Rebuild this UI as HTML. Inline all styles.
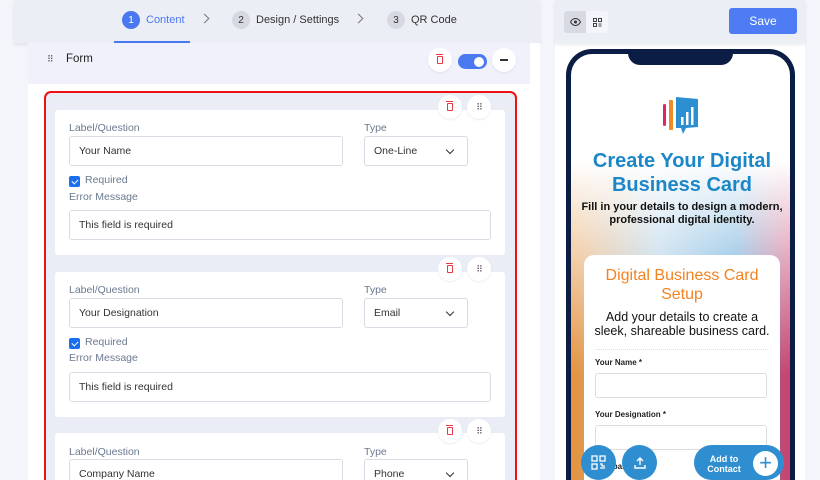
<!DOCTYPE html>
<html><head><style>
*{box-sizing:border-box;margin:0;padding:0}
html,body{width:820px;height:480px;overflow:hidden}
body{background:#f4f5fa;font-family:"Liberation Sans",sans-serif}
#wrap{position:relative;width:820px;height:480px;overflow:hidden}
.abs{position:absolute}
.topbar{left:14px;top:0;width:526px;height:43px;background:#eceef6;box-shadow:0 2px 4px rgba(0,0,0,.08)}
.step{position:absolute;top:10px;height:20px;font-size:11px;color:#333;display:flex;align-items:center;gap:6px}
.num{width:18px;height:18px;border-radius:50%;background:#d6d9e2;color:#333;font-size:10px;display:flex;align-items:center;justify-content:center}
.chev{position:absolute;top:15px;width:7px;height:7px;border-right:1.3px solid #777;border-top:1.3px solid #777;transform:rotate(45deg)}
.circ{position:absolute;width:24px;height:24px;border-radius:50%;background:#fff;box-shadow:0 1px 2px rgba(0,0,0,.08);display:flex;align-items:center;justify-content:center}
.trash{width:6px;height:8px;border:1.4px solid #e53945;border-radius:1px;position:relative}
.trash:before{content:"";position:absolute;top:-3px;left:-2px;width:7px;height:1.4px;background:#e53945}
.dots{font-size:9px;color:#555;letter-spacing:-1px;line-height:1}
.card{position:absolute;left:55px;width:450px;height:145px;background:#fff;border-radius:3px}
.lbl{position:absolute;font-size:10.5px;color:#6b7a90}
.inp{position:absolute;height:30px;border:1px solid #d8dce4;border-radius:3px;font-size:10.5px;color:#333;padding-left:9px;display:flex;align-items:center;background:#fff}
.sel:after{content:"";position:absolute;right:14px;top:10px;width:5px;height:5px;border-right:1.3px solid #333;border-bottom:1.3px solid #333;transform:rotate(45deg)}
.cb{position:absolute;width:11px;height:11px;background:#1a6ff0;border-radius:2px}
.cb:after{content:"";position:absolute;left:3.5px;top:1.5px;width:3px;height:5px;border-right:1.3px solid #fff;border-bottom:1.3px solid #fff;transform:rotate(45deg)}
</style></head><body><div id="wrap">
<div class="abs topbar"></div>
<div class="step" style="left:122px"><span class="num" style="background:#4a78f0;color:#fff">1</span><span style="color:#4a78f0">Content</span></div>
<div class="abs" style="left:114px;top:41px;width:76px;height:2px;background:#4a78f0"></div>
<div class="chev" style="left:201px"></div>
<div class="step" style="left:232px"><span class="num">2</span>Design / Settings</div>
<div class="chev" style="left:355px"></div>
<div class="step" style="left:387px"><span class="num">3</span>QR Code</div>

<div class="abs" style="left:28px;top:43px;width:512px;height:437px;background:#fff"></div>
<div class="abs" style="left:28px;top:43px;width:502px;height:41px;background:#f0f1fb"></div>
<div class="abs dots" style="left:47px;top:55px">⠿</div>
<div class="abs" style="left:66px;top:53px;font-size:11.5px;color:#222">Form</div>
<div class="circ" style="left:428px;top:48px"><div class="trash"></div></div>
<div class="abs" style="left:458px;top:54px;width:29px;height:15px;border-radius:8px;background:#4a78f0"><div class="abs" style="right:3px;top:2.5px;width:10px;height:10px;border-radius:50%;background:#fff"></div></div>
<div class="circ" style="left:492px;top:48px"><div style="width:8px;height:1.5px;background:#333"></div></div>

<div class="abs" style="left:44px;top:91px;width:473px;height:389px;border:2px solid #ee1111;border-bottom:none;border-radius:7px 7px 0 0;background:#eaedf6"></div>

<div class="card" style="top:110px"></div>
<div class="circ" style="left:438px;top:95px"><div class="trash"></div></div>
<div class="circ" style="left:467px;top:95px"><span class="dots">⠿</span></div>
<div class="lbl" style="left:69px;top:122px">Label/Question</div>
<div class="lbl" style="left:364px;top:122px">Type</div>
<div class="inp" style="left:69px;top:136px;width:274px">Your Name</div>
<div class="inp sel" style="left:364px;top:136px;width:104px">One-Line</div>
<div class="cb" style="left:69px;top:176px"></div>
<div class="lbl" style="left:85px;top:174px">Required</div>
<div class="lbl" style="left:69px;top:191px">Error Message</div>
<div class="inp" style="left:69px;top:210px;width:422px">This field is required</div>

<div class="card" style="top:272px"></div>
<div class="circ" style="left:438px;top:257px"><div class="trash"></div></div>
<div class="circ" style="left:467px;top:257px"><span class="dots">⠿</span></div>
<div class="lbl" style="left:69px;top:284px">Label/Question</div>
<div class="lbl" style="left:364px;top:284px">Type</div>
<div class="inp" style="left:69px;top:298px;width:274px">Your Designation</div>
<div class="inp sel" style="left:364px;top:298px;width:104px">Email</div>
<div class="cb" style="left:69px;top:338px"></div>
<div class="lbl" style="left:85px;top:336px">Required</div>
<div class="lbl" style="left:69px;top:352px">Error Message</div>
<div class="inp" style="left:69px;top:372px;width:422px">This field is required</div>

<div class="card" style="top:433px;height:47px;border-radius:3px 3px 0 0"></div>
<div class="circ" style="left:438px;top:419px"><div class="trash"></div></div>
<div class="circ" style="left:467px;top:419px"><span class="dots">⠿</span></div>
<div class="lbl" style="left:69px;top:446px">Label/Question</div>
<div class="lbl" style="left:364px;top:446px">Type</div>
<div class="inp" style="left:69px;top:459px;width:274px;height:21px;border-bottom:none;border-radius:3px 3px 0 0;align-items:flex-start;padding-top:8px">Company Name</div>
<div class="inp sel" style="left:364px;top:459px;width:104px;height:21px;border-bottom:none;border-radius:3px 3px 0 0;align-items:flex-start;padding-top:8px">Phone</div>

<div class="abs" style="left:555px;top:0;width:250px;height:480px;background:#fff"></div>
<div class="abs" style="left:555px;top:0;width:250px;height:43px;background:#eceef6;box-shadow:0 2px 4px rgba(0,0,0,.08)"></div>
<div class="abs" style="left:564px;top:11px;width:22px;height:22px;background:#d7dae3;border-radius:3px 0 0 3px;display:flex;align-items:center;justify-content:center"><svg width="11" height="8" viewBox="0 0 11 8"><path d="M.5 4C2 1.3 4 .5 5.5.5S9 1.3 10.5 4C9 6.7 7 7.5 5.5 7.5S2 6.7.5 4Z" fill="none" stroke="#333" stroke-width="1"/><circle cx="5.5" cy="4" r="1.5" fill="#333"/></svg></div>
<div class="abs" style="left:586px;top:11px;width:22px;height:22px;background:#f4f5fa;border-radius:0 3px 3px 0;display:flex;align-items:center;justify-content:center"><svg width="9" height="9" viewBox="0 0 9 9" fill="none" stroke="#444" stroke-width="1"><rect x=".5" y=".5" width="3" height="3"/><rect x="5.5" y=".5" width="3" height="3"/><rect x=".5" y="5.5" width="3" height="3"/><path d="M5.5 6h3M5.5 8h3"/></svg></div>
<div class="abs" style="left:729px;top:8px;width:68px;height:26px;background:#4e7cf5;border-radius:3px;color:#fff;font-size:12px;display:flex;align-items:center;justify-content:center">Save</div>

<div class="abs" style="left:566px;top:49px;width:229px;height:431px;border:5px solid #0c1d45;border-bottom:none;border-radius:26px 26px 0 0;overflow:hidden;background:linear-gradient(180deg,#fff 0%,#fff 25%,rgba(255,255,255,.6) 45%,rgba(255,255,255,0) 75%),linear-gradient(90deg,#e8923a 0%,#9cc4e0 40%,#3d95d0 75%,#d0406a 100%)"></div>
<div class="abs" style="left:628px;top:49px;width:105px;height:16px;background:#0c1d45;border-radius:0 0 12px 12px"></div>
<svg class="abs" style="left:662px;top:95px" width="38" height="42" viewBox="0 0 38 42"><rect x="1" y="9" width="3" height="22" rx="1.5" fill="#e0245e"/><rect x="7" y="5" width="4" height="30" rx="1" fill="#f08a24"/><path d="M14 2 L36 4 V32 L24 33 L21 39 L19 33 L14 33Z" fill="#2b8fd2"/><rect x="19" y="22" width="2.5" height="8" fill="#fff"/><rect x="24" y="17" width="2.5" height="13" fill="#fff"/><rect x="29" y="12" width="2.5" height="18" fill="#fff"/></svg>
<div class="abs" style="left:572px;top:149px;width:220px;text-align:center;font-size:20px;font-weight:bold;color:#1b86c8;line-height:24px">Create Your Digital<br>Business Card</div>
<div class="abs" style="left:572px;top:201px;width:220px;text-align:center;font-size:11px;font-weight:bold;color:#111;line-height:13px">Fill in your details to design a modern,<br>professional digital identity.</div>

<div class="abs" style="left:584px;top:255px;width:196px;height:225px;background:#fff;border-radius:10px 10px 0 0"></div>
<div class="abs" style="left:584px;top:266px;width:196px;text-align:center;font-size:16px;color:#f5821f;line-height:19px">Digital Business Card<br>Setup</div>
<div class="abs" style="left:584px;top:310px;width:196px;text-align:center;font-size:12.5px;color:#111;line-height:14px">Add your details to create a<br>sleek, shareable business card.</div>
<div class="abs" style="left:595px;top:349px;width:173px;border-top:1px dotted #ddd"></div>
<div class="abs" style="left:595px;top:358px;font-size:8px;font-weight:bold;color:#222">Your Name *</div>
<div class="abs" style="left:595px;top:373px;width:172px;height:25px;border:1px solid #ddd;border-radius:3px"></div>
<div class="abs" style="left:595px;top:410px;font-size:8px;font-weight:bold;color:#222">Your Designation *</div>
<div class="abs" style="left:595px;top:425px;width:172px;height:25px;border:1px solid #ddd;border-radius:3px"></div>
<div class="abs" style="left:595px;top:462px;font-size:8px;font-weight:bold;color:#222">Compa... *</div>

<div class="abs" style="left:581px;top:445px;width:35px;height:35px;border-radius:50%;background:#2e8ed0;display:flex;align-items:center;justify-content:center"><svg width="15" height="15" viewBox="0 0 15 15" fill="none" stroke="#fff" stroke-width="1.3"><rect x="1" y="1" width="5" height="5"/><rect x="9" y="1" width="5" height="5"/><rect x="1" y="9" width="5" height="5"/><path d="M9 9h2v2h3M9 13h5"/></svg></div>
<div class="abs" style="left:622px;top:445px;width:35px;height:35px;border-radius:50%;background:#2e8ed0;display:flex;align-items:center;justify-content:center"><svg width="12" height="12" viewBox="0 0 12 12" fill="none" stroke="#fff" stroke-width="1.4"><path d="M6 8V1M3 4l3-3 3 3M1 8v3h10V8"/></svg></div>
<div class="abs" style="left:694px;top:445px;width:90px;height:35px;border-radius:18px;background:#2e8ed0"></div>
<div class="abs" style="left:700px;top:454px;width:48px;text-align:center;font-size:9px;font-weight:bold;color:#fff;line-height:10px">Add to<br>Contact</div>
<div class="abs" style="left:753px;top:451px;width:25px;height:25px;border-radius:50%;background:#fff;color:#2e8ed0;font-size:22px;line-height:24px;text-align:center">+</div>
</div></body></html>
